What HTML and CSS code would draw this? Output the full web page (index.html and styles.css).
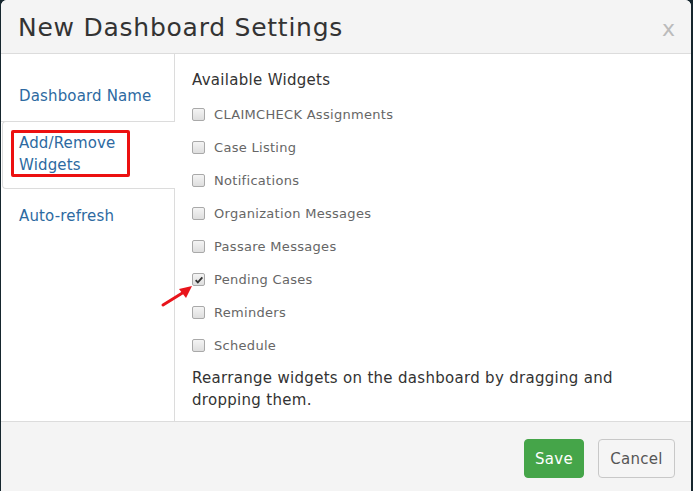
FILE: index.html
```html
<!DOCTYPE html>
<html>
<head>
<meta charset="utf-8">
<link rel="stylesheet" href="styles.css">
</head>
<body>
<div class="modal">
  <div class="modal-header">
    <h1 class="modal-title">New Dashboard Settings</h1>
    <span class="close">x</span>
  </div>
  <div class="modal-body">
    <ul class="nav">
      <li class="nav-item nav-first"><a>Dashboard Name</a></li>
      <li class="nav-item nav-active"><a>Add/Remove<br>Widgets</a><span class="highlight"></span></li>
      <li class="nav-item"><a>Auto-refresh</a></li>
    </ul>
    <div class="content">
      <h2 class="section-title">Available Widgets</h2>
      <ul class="widgets">
        <li class="widget"><span class="box"></span><span class="label">CLAIMCHECK Assignments</span></li>
        <li class="widget"><span class="box"></span><span class="label">Case Listing</span></li>
        <li class="widget"><span class="box"></span><span class="label">Notifications</span></li>
        <li class="widget"><span class="box"></span><span class="label">Organization Messages</span></li>
        <li class="widget"><span class="box"></span><span class="label">Passare Messages</span></li>
        <li class="widget"><span class="box checked"><svg viewBox="0 0 12 12" width="10" height="10"><path d="M2 6.2 L4.6 8.8 L10 2.8" fill="none" stroke="#333" stroke-width="2.2"/></svg></span><span class="label">Pending Cases</span>
          <svg class="arrow" viewBox="0 0 34 26" width="34" height="26"><path d="M3 22 L24 9" stroke="#e8141b" stroke-width="3" stroke-linecap="round"/><path d="M32 3 L19 6 L26 15 Z" fill="#e8141b"/></svg>
        </li>
        <li class="widget"><span class="box"></span><span class="label">Reminders</span></li>
        <li class="widget"><span class="box"></span><span class="label">Schedule</span></li>
      </ul>
      <p class="hint">Rearrange widgets on the dashboard by dragging and dropping them.</p>
    </div>
  </div>
  <div class="modal-footer">
    <button class="btn btn-save">Save</button>
    <button class="btn btn-cancel">Cancel</button>
  </div>
</div>
</body>
</html>
```
FILE: styles.css
```css
html, body {
  margin: 0;
  padding: 0;
  background: #16262e;
  height: 491px;
  overflow: hidden;
}
body {
  font-family: "DejaVu Sans", "Noto Sans", sans-serif;
}
.modal {
  margin-left: 1px;
  width: 690px;
  height: 491px;
  background: #fff;
  border-radius: 6px 6px 0 0;
  overflow: hidden;
  display: flex;
  flex-direction: column;
}
.modal-header {
  height: 53px;
  background: #f4f4f4;
  border-bottom: 1px solid #dcdcdc;
  display: flex;
  align-items: center;
  justify-content: space-between;
  padding: 0 16px 0 17px;
}
.modal-title {
  margin: 2px 0 0;
  font-size: 25px;
  font-weight: normal;
  color: #333;
  letter-spacing: 0.75px;
}
.close {
  color: #bbb;
  font-size: 22px;
  margin-top: 4px;
}
.modal-body {
  display: flex;
  height: 367px;
  border-bottom: 1px solid #dcdcdc;
}
.nav {
  list-style: none;
  margin: 0;
  padding: 0;
  width: 173px;
  border-right: 1px solid #dcdcdc;
  flex-shrink: 0;
}
.nav-item {
  position: relative;
  font-size: 15px;
  line-height: 22px;
  color: #2d6aa1;
  padding: 0 0 0 18px;
  letter-spacing: 0.15px;
}
.nav-item a {
  color: #2d6aa1;
}
.nav-first {
  padding-top: 31px;
  padding-bottom: 14px;
  border-bottom: 1px solid #dcdcdc;
}
.nav-active {
  margin: -1px -1px 0 1px;
  padding: 10px 0 12px 16px;
  background: #fff;
  border: 1px solid #dcdcdc;
  border-right: none;
  border-radius: 4px 0 0 4px;
}
.nav-active + .nav-item {
  padding-top: 16px;
}
.highlight {
  position: absolute;
  left: 8px;
  top: 8px;
  width: 113px;
  height: 41px;
  border: 3px solid #ec1010;
  border-radius: 2px;
}
.content {
  flex: 1;
  padding: 15px 60px 10px 17px;
  color: #333;
}
.section-title {
  margin: 0;
  font-size: 15px;
  line-height: 22px;
  font-weight: normal;
  color: #333;
  letter-spacing: 0.3px;
}
.widgets {
  list-style: none;
  margin: 7px 0 0;
  padding: 0;
}
.widget {
  position: relative;
  height: 33px;
  display: flex;
  align-items: center;
}
.box {
  width: 11px;
  height: 11px;
  border: 1px solid #a9a9a9;
  border-radius: 2px;
  background: linear-gradient(#f4f4f4, #dedede);
  margin-right: 9px;
  display: flex;
  align-items: center;
  justify-content: center;
}
.label {
  font-size: 13px;
  color: #666;
  letter-spacing: 0.3px;
}
.arrow {
  position: absolute;
  left: -32px;
  top: 20px;
}
.hint {
  margin: 5px 0 0;
  font-size: 15px;
  line-height: 22px;
  color: #333;
  letter-spacing: 0.3px;
}
.modal-footer {
  flex: 1;
  background: #f4f4f4;
  display: flex;
  justify-content: flex-end;
  align-items: flex-start;
  gap: 14px;
  padding: 17px 16px 0 0;
}
.btn {
  font-family: "DejaVu Sans", "Noto Sans", sans-serif;
  font-size: 15px;
  height: 39px;
  border-radius: 4px;
  padding: 0;
  letter-spacing: 0.3px;
}
.btn-save {
  width: 60px;
  background: #45a549;
  border: 1px solid #45a549;
  color: #fff;
}
.btn-cancel {
  width: 77px;
  background: #f5f5f5;
  border: 1px solid #c8c8c8;
  color: #555;
}
```
